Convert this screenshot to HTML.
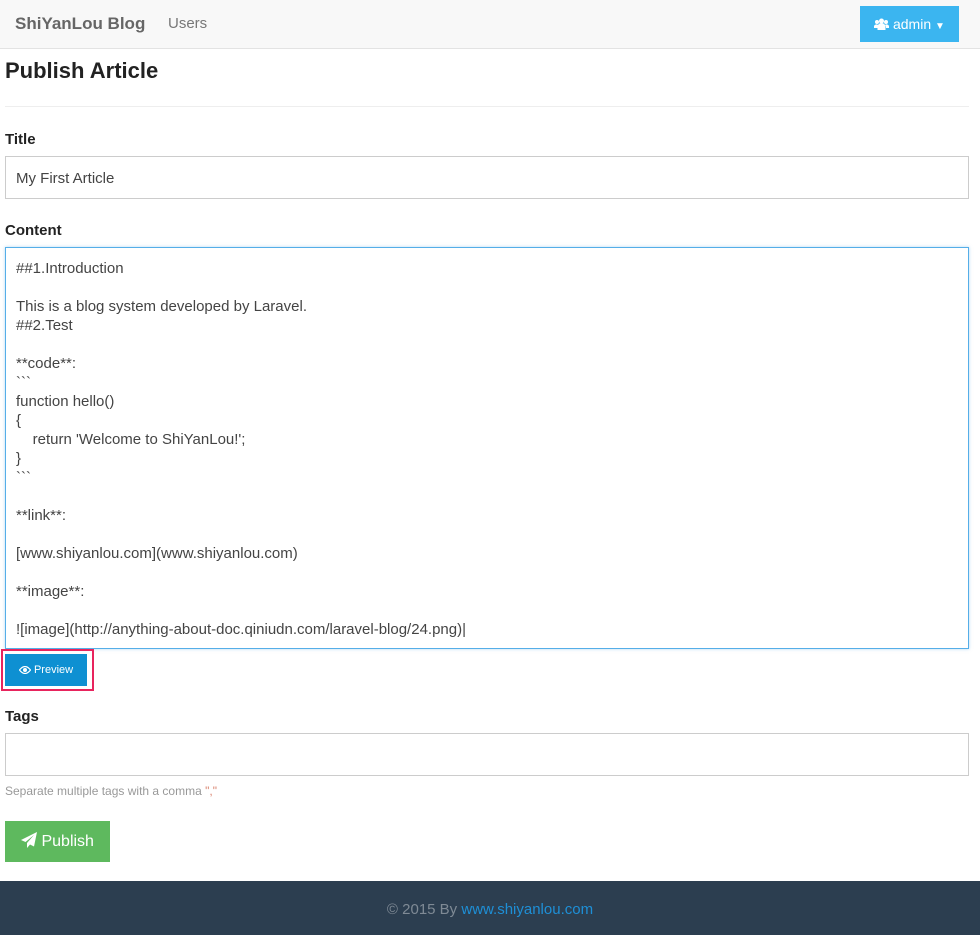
<!DOCTYPE html>
<html><head><meta charset="utf-8"><style>
*{box-sizing:border-box;margin:0;padding:0}
body{width:980px;height:935px;overflow:hidden;background:#fff;font-family:"Liberation Sans",sans-serif;color:#333;position:relative}
.abs{position:absolute}
.nav{left:0;top:0;width:980px;height:49px;background:#f8f8f8;border-bottom:1px solid #e3e3e3}
.lbl{font-weight:bold;font-size:15px;color:#222;left:5px}
.inp{left:5px;width:964px;border:1px solid #ccc}
</style></head><body>
<div class="abs nav"></div>
<div class="abs" style="left:15px;top:14px;font-size:17px;font-weight:bold;color:#666">ShiYanLou Blog</div>
<div class="abs" style="left:168px;top:15px;font-size:15px;color:#777">Users</div>
<div class="abs" style="left:860px;top:6px;width:99px;height:36px;background:#3bb5f0;color:#fff;font-size:14px;line-height:36px;text-align:center">
<svg width="15" height="12" viewBox="0 0 15 12" style="vertical-align:-1px"><circle cx="7.5" cy="3" r="2.5" fill="#fff"/><circle cx="3" cy="4" r="2" fill="#fff"/><circle cx="12" cy="4" r="2" fill="#fff"/><path d="M3.5 12v-3a4 4 0 0 1 8 0v3z M0 10v-2a2.5 2.5 0 0 1 4-1v3z M15 10v-2a2.5 2.5 0 0 0-4-1v3z" fill="#fff"/></svg> admin <span style="font-size:10px">▼</span></div>
<div class="abs" style="left:5px;top:58px;font-size:22px;font-weight:bold;color:#222">Publish Article</div>
<div class="abs" style="left:5px;top:106px;width:964px;height:1px;background:#eee"></div>
<div class="abs lbl" style="top:131px">Title</div>
<div class="abs inp" style="top:156px;height:43px;padding:0 10px;line-height:43px;font-size:15px;color:#444">My First Article</div>
<div class="abs lbl" style="top:222px">Content</div>
<div class="abs inp" style="top:247px;height:402px;border-color:#55aee8;box-shadow:0 0 3px rgba(102,175,233,.5);padding:11px 10px;font-size:15px;line-height:19px;white-space:pre;color:#444">##1.Introduction

This is a blog system developed by Laravel.
##2.Test

**code**:
&#96;&#96;&#96;
function hello()
{
    return 'Welcome to ShiYanLou!';
}
&#96;&#96;&#96;

**link**:

[www.shiyanlou.com](www.shiyanlou.com)

**image**:

![image](http://anything-about-doc.qiniudn.com/laravel-blog/24.png)|</div>
<div class="abs" style="left:1px;top:649px;width:93px;height:42px;border:2px solid #e8245d"></div>
<div class="abs" style="left:5px;top:654px;width:82px;height:32px;background:#0e90d2;color:#fff;font-size:11px;line-height:32px;text-align:center">
<svg width="12" height="8" viewBox="0 0 12 8" style="vertical-align:-0.5px"><path d="M0.5 4Q6-3 11.5 4Q6 11 0.5 4z" fill="none" stroke="#fff" stroke-width="1.2"/><circle cx="6" cy="4" r="2" fill="#fff"/></svg> Preview</div>
<div class="abs lbl" style="top:708px">Tags</div>
<div class="abs inp" style="top:733px;height:43px"></div>
<div class="abs" style="left:5px;top:784px;font-size:12px;color:#999">Separate multiple tags with a comma <span style="color:#d9846f">","</span></div>
<div class="abs" style="left:5px;top:821px;width:105px;height:41px;background:#5eb95e;color:#fff;font-size:16px;line-height:41px;text-align:center">
<svg width="16" height="16" viewBox="0 0 16 16" style="vertical-align:-2px"><path d="M16 0L0 8l4.5 2L13 3 6 11v5l3-3.5 4 2z" fill="#fff"/></svg> Publish</div>
<div class="abs" style="left:0;top:881px;width:980px;height:54px;background:#2c3e50;text-align:center;line-height:58px;font-size:15px;color:#7f8a95">© 2015 By <span style="color:#1e8fd6">www.shiyanlou.com</span></div>
</body></html>
